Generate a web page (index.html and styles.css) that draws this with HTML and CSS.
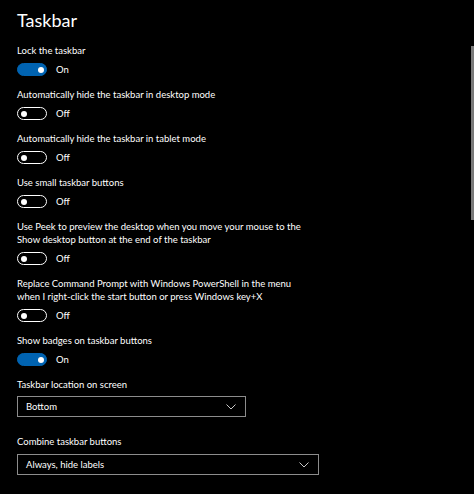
FILE: index.html
```html
<!DOCTYPE html>
<html lang="en">
<head>
  <meta charset="UTF-8">
  <meta name="viewport" content="width=device-width, initial-scale=1.0">
  <title>Taskbar</title>
  <link rel="stylesheet" href="styles.css">
</head>
<body>
  <div class="settings-page">
    <h1 class="page-title">Taskbar</h1>

    <div class="setting">
      <div class="setting-label">Lock the taskbar</div>
      <div class="toggle-row">
        <span class="toggle on"><span class="knob"></span></span>
        <span class="toggle-text">On</span>
      </div>
    </div>

    <div class="setting">
      <div class="setting-label">Automatically hide the taskbar in desktop mode</div>
      <div class="toggle-row">
        <span class="toggle"><span class="knob"></span></span>
        <span class="toggle-text">Off</span>
      </div>
    </div>

    <div class="setting">
      <div class="setting-label">Automatically hide the taskbar in tablet mode</div>
      <div class="toggle-row">
        <span class="toggle"><span class="knob"></span></span>
        <span class="toggle-text">Off</span>
      </div>
    </div>

    <div class="setting">
      <div class="setting-label">Use small taskbar buttons</div>
      <div class="toggle-row">
        <span class="toggle"><span class="knob"></span></span>
        <span class="toggle-text">Off</span>
      </div>
    </div>

    <div class="setting">
      <div class="setting-label">Use Peek to preview the desktop when you move your mouse to the<br>Show desktop button at the end of the taskbar</div>
      <div class="toggle-row">
        <span class="toggle"><span class="knob"></span></span>
        <span class="toggle-text">Off</span>
      </div>
    </div>

    <div class="setting">
      <div class="setting-label">Replace Command Prompt with Windows PowerShell in the menu<br>when I right-click the start button or press Windows key+X</div>
      <div class="toggle-row">
        <span class="toggle"><span class="knob"></span></span>
        <span class="toggle-text">Off</span>
      </div>
    </div>

    <div class="setting">
      <div class="setting-label">Show badges on taskbar buttons</div>
      <div class="toggle-row">
        <span class="toggle on"><span class="knob"></span></span>
        <span class="toggle-text">On</span>
      </div>
    </div>

    <div class="setting">
      <div class="setting-label">Taskbar location on screen</div>
      <div class="dropdown location">
        <span>Bottom</span>
        <svg class="chevron" width="10" height="6" viewBox="0 0 10 6"><path d="M0.5 0.5 L5 5 L9.5 0.5" fill="none" stroke="#c8c8c8" stroke-width="1"/></svg>
      </div>
    </div>

    <div class="setting">
      <div class="setting-label">Combine taskbar buttons</div>
      <div class="dropdown combine">
        <span>Always, hide labels</span>
        <svg class="chevron" width="10" height="6" viewBox="0 0 10 6"><path d="M0.5 0.5 L5 5 L9.5 0.5" fill="none" stroke="#c8c8c8" stroke-width="1"/></svg>
      </div>
    </div>
  </div>

  <div class="scroll-thumb"></div>
</body>
</html>
```

FILE: styles.css
```css
/* Page */
body {
  margin: 0;
  background: #000;
  color: #fff;
  font-family: Lato, "Open Sans", sans-serif;
  overflow: hidden;
}

.settings-page {
  padding: 5px 17px 0;
}

.page-title {
  margin: 0 0 9px;
  font-size: 18px;
  font-weight: 400;
  line-height: 30px;
}

/* One setting: label plus control */
.setting {
  margin-bottom: 12px;
}

.setting-label {
  font-size: 9.5px;
  line-height: 13px;
}

/* Toggle switch */
.toggle-row {
  display: flex;
  align-items: center;
  gap: 9px;
  margin-top: 6px;
  height: 13px;
}

.toggle {
  box-sizing: border-box;
  width: 30px;
  height: 13px;
  border: 1.5px solid #fff;
  border-radius: 7px;
  display: flex;
  align-items: center;
  padding: 0 2.5px;
}

.toggle .knob {
  width: 6px;
  height: 6px;
  border-radius: 50%;
  background: #fff;
}

.toggle.on {
  background: #0063b1;
  border-color: #0063b1;
  justify-content: flex-end;
}

.toggle-text {
  font-size: 9.5px;
}

/* Dropdowns */
.dropdown {
  box-sizing: border-box;
  display: flex;
  align-items: center;
  justify-content: space-between;
  height: 21px;
  margin-top: 5px;
  padding: 0 9px 0 8px;
  border: 1.5px solid #8c8c8c;
  font-size: 9.5px;
}

.dropdown.location {
  width: 229px;
  margin-bottom: 18px;
}

.dropdown.combine {
  width: 302px;
  margin-top: 6px;
}

/* Scrollbar thumb on the right edge */
.scroll-thumb {
  position: absolute;
  top: 46px;
  right: 0;
  width: 3px;
  height: 174px;
  background: #7a7a7a;
}
```
